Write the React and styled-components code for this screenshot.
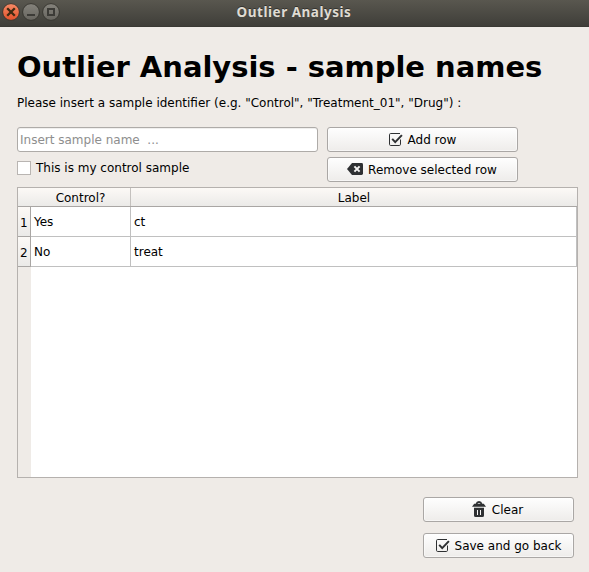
import React from "react";
import styled, { createGlobalStyle } from "styled-components";

const GlobalStyle = createGlobalStyle`
  * { box-sizing: border-box; }
  html, body { margin: 0; padding: 0; background: #efebe7; }
  body { font-family: "DejaVu Sans", sans-serif; font-size: 12px; color: #000; overflow: hidden; }
`;

const Window = styled.div`
  width: 589px;
  height: 572px;
  display: flex;
  flex-direction: column;
  background: #efebe7;
`;

const TitleBar = styled.header`
  height: 27px;
  flex: none;
  display: grid;
  grid-template-columns: 64px 1fr 65px;
  background: linear-gradient(#59574f, #3f3e39);
  border-bottom: 1px solid #3a3934;
`;

const WindowControls = styled.div`
  display: flex;
  gap: 2px;
  padding: 3px 0 0 2px;
  svg { display: block; }
`;

const WindowTitle = styled.div`
  text-align: center;
  font: 700 13.5px/24px "Noto Sans", "Open Sans", sans-serif;
  letter-spacing: 0.52px;
  color: #dfdbd2;
  text-shadow: 0 -1px 0 #33322e;
`;

const Content = styled.main`
  flex: 1;
  display: flex;
  flex-direction: column;
  padding: 21px 11px 14px 17px;
`;

const Heading = styled.h1`
  margin: 0;
  height: 38px;
  font-size: 29px;
  line-height: 38px;
  font-weight: 700;
  letter-spacing: -0.03px;
  white-space: nowrap;
`;

const Hint = styled.p`
  margin: 8px 0 0;
  height: 18px;
  line-height: 18px;
  white-space: nowrap;
`;

const Form = styled.div`
  margin-top: 15px;
  display: grid;
  grid-template-columns: 301px 191px;
  grid-template-rows: 25px 25px;
  column-gap: 9px;
  row-gap: 5px;
`;

const NameInput = styled.input`
  width: 100%;
  height: 25px;
  border: 1px solid #aeaba8;
  border-radius: 3px;
  padding: 0 2px;
  background: #fff;
  font: 12px "DejaVu Sans", sans-serif;
  outline: none;
  box-shadow: inset 0 1px 0 #f0efee;
  &::placeholder { color: #8e8e8e; opacity: 1; }
`;

const CheckLabel = styled.label`
  display: flex;
  align-items: center;
  gap: 5px;
  height: 22px;
`;

const CheckBox = styled.input`
  appearance: none;
  width: 14px;
  height: 14px;
  margin: 0;
  border: 1px solid #b9b5b2;
  background: #fff;
`;

const Button = styled.button`
  width: ${(p) => p.$width}px;
  height: 25px;
  padding: 0 ${(p) => p.$shift ?? 0}px 0 0;
  display: flex;
  align-items: center;
  justify-content: center;
  gap: ${(p) => p.$gap ?? 5}px;
  border: 1px solid #aaa7a5;
  border-radius: 3px;
  background: linear-gradient(#fefefe, #eeecea);
  box-shadow: inset 0 0 0 1px rgba(255, 255, 255, 0.5);
  font: 12px "DejaVu Sans", sans-serif;
  color: #000;
  white-space: nowrap;
  svg { display: block; flex: none; margin-bottom: ${(p) => p.$iconLift ?? 0}px; }
`;

const Table = styled.section`
  margin-top: 5px;
  width: 561px;
  height: 291px;
  flex: none;
  display: flex;
  flex-direction: column;
  border: 1px solid #b5b1ae;
  background: #fff;
`;

const HeaderRow = styled.div`
  display: grid;
  grid-template-columns: 113px 1fr;
  grid-template-rows: 18px;
  height: 19px;
  flex: none;
  border-bottom: 1px solid #a9a6a4;
  background: linear-gradient(#fcf9f6, #ebeae8);
`;

const HeaderCell = styled.div`
  text-align: center;
  line-height: 20px;
  padding-left: ${(p) => p.$inset ?? 0}px;
  border-right: ${(p) => (p.$divider ? "1px solid #c4c1be" : "0")};
`;

const Row = styled.div`
  display: grid;
  grid-template-columns: 13px 100px 1fr;
  grid-template-rows: 30px;
  height: 30px;
  flex: none;
`;

const RowNumber = styled.div`
  padding-left: 2px;
  line-height: 32px;
  background: linear-gradient(#fcf9f6, #ebeae8);
  border-right: 1px solid #a9a6a4;
  border-bottom: 1px solid #a9a6a4;
`;

const Cell = styled.div`
  padding-left: 3px;
  line-height: 30px;
  border-right: 1px solid #c0c0c0;
  border-bottom: 1px solid #c0c0c0;
`;

const EmptyGutter = styled.div`
  flex: 1;
  width: 13px;
  background: #efebe7;
`;

const Actions = styled.footer`
  margin-top: auto;
  padding-right: 4px;
  display: flex;
  flex-direction: column;
  align-items: flex-end;
  gap: 11px;
`;

const tones = {
  close: { top: "#f68b67", bottom: "#e2512a", glyph: "#3f2a12" },
  plain: { top: "#85837c", bottom: "#67655f", glyph: "#3c3b37" },
};

function WindowButton({ kind }) {
  const tone = kind === "close" ? tones.close : tones.plain;
  return (
    <svg width="18" height="18" viewBox="0 0 18 18">
      <defs>
        <linearGradient id={`fill-${kind}`} x1="0" y1="0" x2="0" y2="1">
          <stop offset="0" stopColor={tone.top} />
          <stop offset="1" stopColor={tone.bottom} />
        </linearGradient>
      </defs>
      <circle cx="9" cy="9" r="8.4" fill={`url(#fill-${kind})`} stroke="#383731" strokeWidth="1" />
      {kind === "close" && (
        <path d="M5.2 5.2l7.6 7.6M12.8 5.2l-7.6 7.6" stroke={tone.glyph} strokeWidth="2.3" />
      )}
      {kind === "minimize" && <path d="M5 12h8" stroke={tone.glyph} strokeWidth="2" />}
      {kind === "maximize" && (
        <rect x="6" y="6" width="6" height="6" fill="none" stroke={tone.glyph} strokeWidth="2" />
      )}
    </svg>
  );
}

const CheckIcon = () => (
  <svg width="14" height="13" viewBox="0 0 14 13" fill="none" stroke="#2e3032">
    <path d="M11.5 6.5v4.8q0 1.2-1.2 1.2H1.7q-1.2 0-1.2-1.2V1.7Q.5.5 1.7.5h9.3" />
    <path d="M3.2 5.9l3 3.2 6.7-7" strokeWidth="2" />
  </svg>
);

const RemoveIcon = () => (
  <svg width="16" height="12" viewBox="0 0 16 12">
    <path d="M5 0h9.6Q16 0 16 1.4v9.2q0 1.4-1.4 1.4H5L0 6z" fill="#2e3032" />
    <path d="M7.4 3.4l5.2 5.2M12.6 3.4l-5.2 5.2" stroke="#f6f5f4" strokeWidth="2" />
  </svg>
);

const TrashIcon = () => (
  <svg width="14" height="16" viewBox="0 0 14 16">
    <path d="M4.5 3Q5 1 7 1t2.5 2" fill="none" stroke="#2e3032" strokeWidth="1.8" />
    <path d="M2.2 2.8h9.6L14 5.8H0zM2 6.8h10v7.7q0 1.5-1.5 1.5h-7Q2 16 2 14.5z" fill="#2e3032" />
    <path d="M5.5 9v5M8.5 9v5" stroke="#f6f5f4" />
  </svg>
);

const samples = [
  { control: "Yes", label: "ct" },
  { control: "No", label: "treat" },
];

export default function App() {
  return (
    <>
      <GlobalStyle />
      <Window>
        <TitleBar>
          <WindowControls>
            <WindowButton kind="close" />
            <WindowButton kind="minimize" />
            <WindowButton kind="maximize" />
          </WindowControls>
          <WindowTitle>Outlier Analysis</WindowTitle>
        </TitleBar>
        <Content>
          <Heading>Outlier Analysis - sample names</Heading>
          <Hint>Please insert a sample identifier (e.g. "Control", "Treatment_01", "Drug") :</Hint>
          <Form>
            <NameInput placeholder="Insert sample name  ..." />
            <Button $width={191}><CheckIcon />Add row</Button>
            <CheckLabel><CheckBox type="checkbox" />This is my control sample</CheckLabel>
            <Button $width={191} $shift={1} $iconLift={1}><RemoveIcon />Remove selected row</Button>
          </Form>
          <Table>
            <HeaderRow>
              <HeaderCell $divider $inset={13}>Control?</HeaderCell>
              <HeaderCell>Label</HeaderCell>
            </HeaderRow>
            {samples.map((s, i) => (
              <Row key={s.label}>
                <RowNumber>{i + 1}</RowNumber>
                <Cell>{s.control}</Cell>
                <Cell>{s.label}</Cell>
              </Row>
            ))}
            <EmptyGutter />
          </Table>
          <Actions>
            <Button $width={151} $gap={6} $shift={2} $iconLift={1}><TrashIcon />Clear</Button>
            <Button $width={151}><CheckIcon />Save and go back</Button>
          </Actions>
        </Content>
      </Window>
    </>
  );
}
